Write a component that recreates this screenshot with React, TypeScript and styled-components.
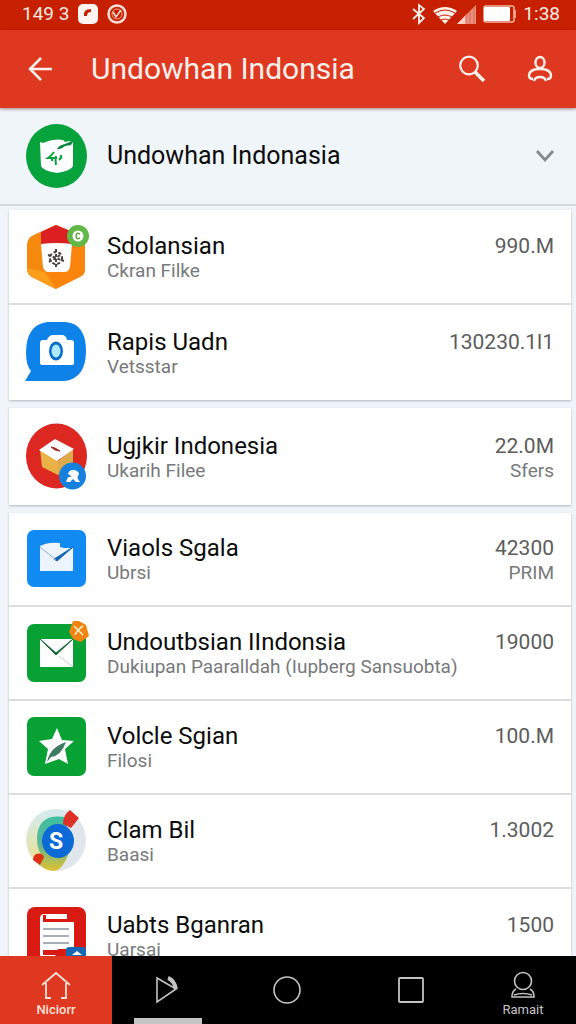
import React from "react";
import styled, { createGlobalStyle, css } from "styled-components";

const GlobalStyle = createGlobalStyle`
  * { box-sizing: border-box; }
  body { margin: 0; font-family: Roboto, "Liberation Sans", sans-serif; background: #eff4f9; }
  button { font: inherit; color: inherit; border: 0; padding: 0; background: none; cursor: pointer; }
  h1, h2, p, ul { margin: 0; padding: 0; font-weight: 400; }
  svg { display: block; flex: none; }
`;

const Screen = styled.div`
  height: 100vh;
  display: flex;
  flex-direction: column;
  overflow: hidden;
`;

const StatusBar = styled.div`
  flex: none;
  height: 30px;
  padding: 0 16px 2px 22px;
  display: flex;
  align-items: center;
  justify-content: space-between;
  background: #c62000;
  color: #ffe9e2;
  font-size: 19px;
  line-height: 24px;
`;

const StatusGroup = styled.div<{ $gap: number }>`
  display: flex;
  align-items: center;
  gap: ${(p) => p.$gap}px;
`;

const AppBar = styled.header`
  flex: none;
  height: 78px;
  padding: 0 22px;
  display: flex;
  align-items: center;
  background: #df3820;
  color: #fff0ea;
  box-shadow: 0 1px 3px rgba(90, 20, 10, 0.5);
  z-index: 1;
`;

const IconButton = styled.button`
  flex: none;
  width: 36px;
  height: 40px;
  display: flex;
  align-items: center;
  justify-content: center;
`;

const AppTitle = styled.h1`
  flex: 1;
  margin-left: 33px;
  font-size: 30px;
  line-height: 40px;
  white-space: nowrap;
`;

const Actions = styled.div`
  display: flex;
  gap: 32px;
  margin-right: -4px;
`;

const Content = styled.main`
  flex: 1;
  min-height: 0;
  overflow-y: auto;
  scrollbar-width: none;
`;

const Account = styled.button`
  width: 100%;
  height: 98px;
  padding: 0 20px 0 25px;
  display: flex;
  align-items: center;
  gap: 18px;
  text-align: left;
  border-bottom: 2px solid #d5dade;
  background: #f0f5fa;
`;

const AccountName = styled.span`
  flex: 1;
  font-size: 25px;
  line-height: 28px;
  color: #0c0c0c;
`;

const Cards = styled.div`
  padding: 4px 5px 0 9px;
  display: flex;
  flex-direction: column;
  gap: 8px;
`;

const Card = styled.ul`
  list-style: none;
  background: #fff;
  box-shadow: 0 1px 2px rgba(60, 70, 80, 0.35);
`;

const Row = styled.li<{ $height: number }>`
  height: ${(p) => p.$height}px;
  padding: 0 17px 0 16px;
  display: flex;
  align-items: center;
  gap: 18px;
  border-bottom: 2px solid #dcdde0;
  &:last-child { border-bottom: 0; }
`;

const Labels = styled.div<{ $end?: boolean }>`
  flex: ${(p) => (p.$end ? "none" : "1")};
  min-width: 0;
  min-height: 50px;
  white-space: nowrap;
  text-align: ${(p) => (p.$end ? "right" : "left")};
`;

const Name = styled.h2`
  font-size: 24px;
  line-height: 28px;
  color: #0c0c0c;
`;

const Detail = styled.p`
  font-size: 19px;
  line-height: 22px;
  color: #77797b;
`;

const Amount = styled.p`
  font-size: 21px;
  line-height: 28px;
  color: #5c5c5c;
`;

const NavBar = styled.nav`
  flex: none;
  height: 68px;
  display: grid;
  grid-template-columns: 112fr 110fr 130fr 118fr 106fr;
  background: #000;
  color: #c4c4c4;
`;

const NavItem = styled.button<{ $active?: boolean; $marked?: boolean; $labelled?: boolean }>`
  position: relative;
  display: flex;
  flex-direction: column;
  align-items: center;
  justify-content: center;
  gap: 3px;
  font-size: 13px;
  line-height: 16px;
  ${(p) => p.$labelled && css`padding-top: 8px;`}
  ${(p) => p.$active && css`background: #df3820; color: #ffe0d6; font-weight: 500;`}
  ${(p) => p.$marked && css`
    &::after {
      content: "";
      position: absolute;
      bottom: 0;
      left: 22px;
      right: 20px;
      height: 6px;
      background: #c4c4c4;
    }
  `}
`;

const Art = ({ children }: { children: React.ReactNode }) => (
  <svg width="64" height="66" viewBox="0 0 64 66" aria-hidden="true" overflow="visible">
    {children}
  </svg>
);

const BoxBadge = () => (
  <Art>
    <ellipse cx="31.5" cy="33" rx="30.5" ry="32" fill="#06a33c" />
    <path d="M15 19l3 1q10-5 20-3l2 2q3-1 8-1v25q-2 5-16 7-14-2-16-7z" fill="#fff" />
    <path d="M32 26q2-4 8-5l9-4-3 5-6 1q-4 4-8 3z" fill="#06893a" />
    <path d="M29 29q-3 4-6 6h9m-5-1v4m4-5q-1 4 0 9m5-10q1 3-2 5" fill="none" stroke="#06a33c" strokeWidth="2" />
  </Art>
);

const Shield = () => (
  <Art>
    <path d="M31 1L54 11q6 3 6 9v26q0 5-5 7L31 65 7 53q-5-3-5-8V22q0-8 7-11z" fill="#fb850c" />
    <path d="M31 1L9 11q-7 3-7 11v23q0 5 5 8l24 12-10-17-5-4z" fill="#f5890d" />
    <path d="M2 44q10 2 18 4l11 17L7 53q-5-3-5-9z" fill="#fb9e1b" />
    <path d="M16 8L31 1l17 7v12H16z" fill="#dc1f20" />
    <path d="M16 20q15-2 31 0l-2 23q-1 5-6 5H24q-5 0-6-5z" fill="#fff" />
    <g fill="none" stroke="#49423f" strokeWidth="2" strokeDasharray="3 2">
      <circle cx="31" cy="34" r="6" />
      <path d="M31 25v18M23 31l16 6M24 38l13-8" />
    </g>
    <circle cx="53" cy="12" r="11" fill="#62b846" />
    <circle cx="53" cy="12" r="5.5" fill="#fff" />
    <path d="M55 10q-4-2-4 2t4 2" fill="none" stroke="#62a13b" strokeWidth="1.5" />
  </Art>
);

const Camera = () => (
  <Art>
    <path d="M22 2h19q20 2 20 29T40 61H0l6-10Q1 45 1 33 1 5 22 2z" fill="#0d83ea" />
    <path d="M15 23q0-3 3-3h4q2-5 6-5h9q4 0 5 5h4q3 0 3 3v20q0 2-3 2H17q-2 0-2-2z" fill="#fff" />
    <ellipse cx="31" cy="31" rx="7" ry="9.5" fill="#076bc9" />
    <ellipse cx="31" cy="31" rx="4.5" ry="6.5" fill="#aeeaff" />
  </Art>
);

const Carton = () => (
  <Art>
    <ellipse cx="31.5" cy="32" rx="30.5" ry="32.5" fill="#dd2721" />
    <path d="M15 25l18 12v14L17 43z" fill="#e8b246" />
    <path d="M33 37l15-12v18L33 51z" fill="#dfaa49" />
    <path d="M30 15l19 10-17 12-18-11z" fill="#fff" />
    <path d="M26 23l4 1 5 3-5-1z" fill="#a52a20" stroke="#a52a20" />
    <circle cx="47.5" cy="52" r="13.5" fill="#1581dc" />
    <path d="M43 50q1-4 5-4 5 0 6 4l-1 2q-1 1 0 3l2 3h-4l-3-3-3 3h-4l2-5h3l-1-2z" fill="#fff" />
  </Art>
);

const BlueMail = () => (
  <Art>
    <rect x="2" y="4" width="59" height="57" rx="7" fill="#118bf1" />
    <path d="M15 20l5-2q7-2 15-1v4l4 1h9v23H15z" fill="#eef4fd" />
    <path d="M29 33l3 2 16-14-14 9z" fill="#1467b8" stroke="#1467b8" />
    <path d="M15 21l16 13" stroke="#8ba9c9" />
  </Art>
);

const GreenMail = () => (
  <Art>
    <rect x="2" y="4" width="59" height="58" rx="7" fill="#08a134" />
    <path d="M15 19h33v28H15z" fill="#fff" />
    <path d="M15 19l16 14 17-14-17 16z" fill="#176c36" stroke="#176c36" />
    <path d="M34 36l14 11" stroke="#b9d4c0" />
    <path d="M48 1l6 0 7 4 3 11-8 6-8-3-4-7z" fill="#f28411" />
    <path d="M49 6l9 9m0-9q-5 3-8 9" fill="none" stroke="#fff1c9" strokeWidth="1.5" />
  </Art>
);

const Star = () => (
  <Art>
    <rect x="2" y="3" width="59" height="59" rx="7" fill="#08a134" />
    <path d="M32 14l5 12 12 1-9 8 3 15-9-5-14 5 3-15-9-8 13-2z" fill="#fff" />
    <path d="M22 48q3-15 19-20-5 14-15 15z" fill="#3f7d62" />
  </Art>
);

const Disc = () => (
  <Art>
    <defs>
      <linearGradient id="sweep" x1="0" y1="0" x2="0" y2="1">
        <stop offset="0" stopColor="#3fbfa0" />
        <stop offset=".5" stopColor="#5cb79a" />
        <stop offset="1" stopColor="#dfc12e" />
      </linearGradient>
      <linearGradient id="rim" x1="0" y1="0" x2="0" y2="1">
        <stop offset="0" stopColor="#d3ebf3" />
        <stop offset="1" stopColor="#ecdf83" />
      </linearGradient>
    </defs>
    <ellipse cx="31" cy="32" rx="30" ry="31" fill="#e1e5ec" />
    <path d="M39 3Q10-4 2 26q-3 27 27 37l7-8z" fill="url(#rim)" />
    <path d="M40 9q-27-4-28 21 0 14 6 18-4 5-4 8 8 9 19 6 10-8 12-24z" fill="url(#sweep)" />
    <ellipse cx="33" cy="33" rx="16" ry="17" fill="#0b6ad6" />
    <path d="M45 2l9 8-8 10-8-4q0-9 7-14z" fill="#dd3026" />
    <path d="M11 46q6-2 8 3l-4 8-7-5q0-4 3-6z" fill="#dd3212" />
    <text x="31" y="41" textAnchor="middle" fontSize="23" fontWeight="700" fill="#fff">S</text>
  </Art>
);

const Notes = () => (
  <Art>
    <rect x="2" y="4" width="59" height="59" rx="8" fill="#d91a12" />
    <path d="M19 11h23v8h7v27H33l-3 8H17q-2 0-2-3V16q0-5 4-5z" fill="#fff" />
    <path d="M18 12v7h24v-3H21v-4z" fill="#d91a12" />
    <path d="M18 26h26M18 33h26M18 40h26" stroke="#a9adba" strokeWidth="2" />
    <path d="M18 47h26v5H18z" fill="#d91a12" />
    <rect x="41" y="44" width="20" height="20" rx="3" fill="#1768b3" />
    <path d="M47 52l5-4 5 4zm1 2h8l1 6H47z" fill="#fff" />
  </Art>
);

type Item = {
  icon: React.ReactNode;
  name: string;
  detail: string;
  amount: string;
  unit?: string;
};

const groups: { height: number; items: Item[] }[] = [
  {
    height: 95,
    items: [
      { icon: <Shield />, name: "Sdolansian", detail: "Ckran Filke", amount: "990.M" },
      { icon: <Camera />, name: "Rapis Uadn", detail: "Vetsstar", amount: "130230.1l1" },
    ],
  },
  {
    height: 97,
    items: [{ icon: <Carton />, name: "Ugjkir Indonesia", detail: "Ukarih Filee", amount: "22.0M", unit: "Sfers" }],
  },
  {
    height: 94,
    items: [
      { icon: <BlueMail />, name: "Viaols Sgala", detail: "Ubrsi", amount: "42300", unit: "PRIM" },
      { icon: <GreenMail />, name: "Undoutbsian IIndonsia", detail: "Dukiupan Paaralldah (Iupberg Sansuobta)", amount: "19000" },
      { icon: <Star />, name: "Volcle Sgian", detail: "Filosi", amount: "100.M" },
      { icon: <Disc />, name: "Clam Bil", detail: "Baasi", amount: "1.3002" },
      { icon: <Notes />, name: "Uabts Bganran", detail: "Uarsai", amount: "1500" },
    ],
  },
];

export default function App() {
  return (
    <Screen>
      <GlobalStyle />
      <StatusBar>
        <StatusGroup $gap={9}>
          <span>149 3</span>
          <svg width="20" height="20" viewBox="0 0 20 20" aria-hidden="true">
            <rect width="20" height="20" rx="5" fill="#fff4ef" />
            <path d="M6 12q-1-7 7-7v3q-4 0-4 4z" fill="#c62000" />
          </svg>
          <svg width="20" height="20" viewBox="0 0 20 20" aria-hidden="true">
            <circle cx="10" cy="10" r="8.5" fill="none" stroke="#ffe0d6" strokeWidth="2.5" />
            <circle cx="10" cy="10" r="5" fill="none" stroke="#f3a896" />
            <path d="M6 8l3 5 5-7" fill="none" stroke="#ffe0d6" strokeWidth="1.5" />
          </svg>
        </StatusGroup>
        <StatusGroup $gap={7}>
          <svg width="64" height="22" viewBox="0 0 64 22" aria-hidden="true">
            <path d="M1 6l11 9-5 5V2l5 4L1 16" fill="none" stroke="#fff0ea" strokeWidth="1.8" />
            <path d="M33 21L21 8q12-8 24 0z" fill="#fff0ea" />
            <path d="M23 10q10-6 20 0M26 14q7-4 14 0M29 17q4-2 8 0" fill="none" stroke="#c62000" />
            <path d="M45 21L64 2v19z" fill="#e98f7d" />
            <path d="M45 21l9-9v9z" fill="#f9cfc4" />
            <path d="M54 11v10M58 8v13M62 4v17" stroke="#d96a55" />
          </svg>
          <svg width="33" height="18" viewBox="0 0 33 18" aria-hidden="true">
            <rect x="1" y="1" width="30" height="16" rx="2" fill="none" stroke="#f5b6a8" strokeWidth="1.5" />
            <rect x="1" y="2" width="26" height="14" rx="1" fill="#fff" />
            <path d="M32 5v8" stroke="#f5b6a8" strokeWidth="1.5" />
          </svg>
          <span>1:38</span>
        </StatusGroup>
      </StatusBar>

      <AppBar>
        <IconButton aria-label="Back">
          <svg width="26" height="26" viewBox="0 0 26 26" fill="none" stroke="currentColor" strokeWidth="2.5">
            <path d="M25 13H3M14 2L3 13l11 11" />
          </svg>
        </IconButton>
        <AppTitle>Undowhan Indonsia</AppTitle>
        <Actions>
          <IconButton aria-label="Search">
            <svg width="28" height="28" viewBox="0 0 28 28" fill="none" stroke="currentColor">
              <circle cx="11" cy="10.5" r="8.8" strokeWidth="2.2" />
              <path d="M17 17l9 9" strokeWidth="3.5" />
            </svg>
          </IconButton>
          <IconButton aria-label="Profile">
            <svg width="26" height="28" viewBox="0 0 26 28" fill="none" stroke="currentColor" strokeWidth="2.4">
              <ellipse cx="13" cy="7.5" rx="4.5" ry="5.5" />
              <path d="M6 24q-4 0-4-3 0-7 11-7t11 7q0 3-4 3M7 26q1-4 6-4t6 4" />
            </svg>
          </IconButton>
        </Actions>
      </AppBar>

      <Content>
        <Account>
          <BoxBadge />
          <AccountName>Undowhan Indonasia</AccountName>
          <svg width="22" height="14" viewBox="0 0 22 14" fill="none" stroke="#85898c" strokeWidth="2.8" aria-hidden="true">
            <path d="M3 2l8 9 8-9" />
          </svg>
        </Account>
        <Cards>
          {groups.map((group) => (
            <Card key={group.height}>
              {group.items.map((item) => (
                <Row key={item.name} $height={group.height}>
                  {item.icon}
                  <Labels>
                    <Name>{item.name}</Name>
                    <Detail>{item.detail}</Detail>
                  </Labels>
                  <Labels $end>
                    <Amount>{item.amount}</Amount>
                    {item.unit && <Detail>{item.unit}</Detail>}
                  </Labels>
                </Row>
              ))}
            </Card>
          ))}
        </Cards>
      </Content>

      <NavBar>
        <NavItem $active $labelled>
          <svg width="30" height="28" viewBox="0 0 30 28" fill="none" stroke="currentColor" strokeWidth="1.8" aria-hidden="true">
            <path d="M1 14L15 2l14 12M5 12v15h5m10 0h5V12" />
          </svg>
          Niciorr
        </NavItem>
        <NavItem $marked aria-label="Play">
          <svg width="24" height="28" viewBox="0 0 24 28" fill="none" stroke="currentColor" strokeWidth="1.6">
            <path d="M2 2v24l19-13L2 2z" />
            <path d="M13 2q6 2 8 11" strokeWidth="4" />
          </svg>
        </NavItem>
        <NavItem aria-label="Home">
          <svg width="28" height="28" viewBox="0 0 28 28" fill="none" stroke="currentColor" strokeWidth="1.6">
            <circle cx="14" cy="14" r="13" />
          </svg>
        </NavItem>
        <NavItem aria-label="Recents">
          <svg width="26" height="26" viewBox="0 0 26 26" fill="none" stroke="currentColor" strokeWidth="1.8">
            <rect x="1" y="1" width="24" height="24" rx="1" />
          </svg>
        </NavItem>
        <NavItem $labelled>
          <svg width="26" height="28" viewBox="0 0 26 28" fill="none" stroke="currentColor" strokeWidth="1.6" aria-hidden="true">
            <circle cx="13" cy="10" r="8.5" />
            <path d="M6 18q-4 2-4 8h22q0-6-4-8M4 24q9-3 18 0" />
          </svg>
          Ramait
        </NavItem>
      </NavBar>
    </Screen>
  );
}
